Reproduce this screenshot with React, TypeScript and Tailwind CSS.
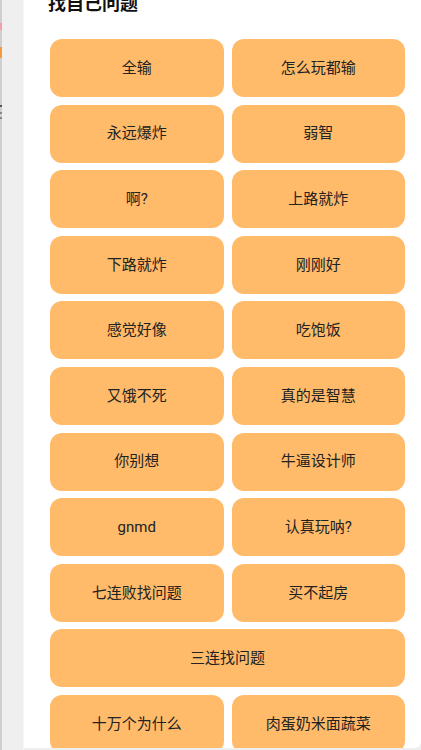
import React from "react"

const items: { label: string; wide?: boolean }[] = [
  { label: "全输" },
  { label: "怎么玩都输" },
  { label: "永远爆炸" },
  { label: "弱智" },
  { label: "啊?" },
  { label: "上路就炸" },
  { label: "下路就炸" },
  { label: "刚刚好" },
  { label: "感觉好像" },
  { label: "吃饱饭" },
  { label: "又饿不死" },
  { label: "真的是智慧" },
  { label: "你别想" },
  { label: "牛逼设计师" },
  { label: "gnmd" },
  { label: "认真玩呐?" },
  { label: "七连败找问题" },
  { label: "买不起房" },
  { label: "三连找问题", wide: true },
  { label: "十万个为什么" },
  { label: "肉蛋奶米面蔬菜" },
]

export default function App() {
  return (
    <div
      className="flex h-[750px] w-[421px] overflow-hidden bg-[#efefef]"
      style={{ fontFamily: 'Roboto, "Noto Sans CJK SC", sans-serif' }}
    >
      {/* page behind the sheet */}
      <div className="flex w-[24px] shrink-0">
        <div className="flex w-[2px] flex-col bg-[#cfcfcf]">
          <div className="mt-[23px] h-[7px] bg-[#f2a0a8]" />
          <div className="mt-[17px] h-[11px] bg-[#f29a3c]" />
          <div className="mt-[47px] h-[2px] bg-[#555]" />
          <div className="mt-[5px] h-[2px] bg-[#888]" />
          <div className="mt-[3px] h-[2px] bg-[#888]" />
        </div>
        <div className="flex-1" />
        <div className="w-px bg-[#f7f7f7]" />
      </div>

      <div className="mb-[2px] flex flex-1 flex-col overflow-hidden rounded-br-[6px] bg-white">
        <h2 className="-mt-[5px] ml-[24px] text-[18px] font-bold leading-[18px] text-[#111]">
          找自己问题
        </h2>
        <div className="ml-[26px] mt-[26px] grid w-[355px] grid-cols-2 gap-x-2 gap-y-[7.6px]">
          {items.map((it) => (
            <button
              key={it.label}
              className={`flex h-[58px] items-center justify-center rounded-xl bg-[#ffbb6a] text-[15px] text-[#222] ${
                it.wide ? "col-span-2" : ""
              }`}
            >
              {it.label}
            </button>
          ))}
        </div>
      </div>
    </div>
  )
}
